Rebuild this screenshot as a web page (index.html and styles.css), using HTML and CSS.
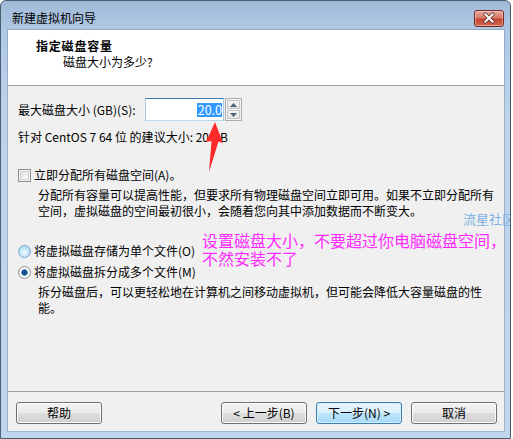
FILE: index.html
```html
<!DOCTYPE html>
<html lang="zh-CN">
<head>
<meta charset="utf-8">
<title>新建虚拟机向导</title>
<link rel="stylesheet" href="styles.css">
</head>
<body>
<div class="window">
  <div class="titlebar">
    <span class="title">新建虚拟机向导</span>
    <div class="close">
      <svg width="30" height="17" viewBox="0 0 30 17">
        <path d="M11 4 L19 12 M19 4 L11 12" stroke="#5a2a24" stroke-width="4" stroke-linecap="round"/>
        <path d="M11 4 L19 12 M19 4 L11 12" stroke="#ffffff" stroke-width="2.2" stroke-linecap="round"/>
      </svg>
    </div>
  </div>
  <div class="client">
    <div class="header">
      <div class="h-title">指定磁盘容量</div>
      <div class="h-sub">磁盘大小为多少?</div>
    </div>
    <div class="content">
      <div class="size-row">
        <span class="size-label">最大磁盘大小 (GB)(S):</span>
        <div class="textbox"><span class="sel">20.0</span></div>
        <div class="spin">
          <div class="spin-btn"><svg width="7" height="4" viewBox="0 0 7 4"><path d="M0 4 L3.5 0 L7 4 Z" fill="#4b5f7f"/></svg></div>
          <div class="spin-btn"><svg width="7" height="4" viewBox="0 0 7 4"><path d="M0 0 L3.5 4 L7 0 Z" fill="#4b5f7f"/></svg></div>
        </div>
      </div>
      <div class="line suggest">针对 CentOS 7 64 位 的建议大小: 20 GB</div>
      <div class="line opt opt-check"><span class="checkbox"></span><span>立即分配所有磁盘空间(A)。</span></div>
      <div class="desc">分配所有容量可以提高性能，但要求所有物理磁盘空间立即可用。如果不立即分配所有<br>空间，虚拟磁盘的空间最初很小，会随着您向其中添加数据而不断变大。</div>
      <div class="line opt opt-r1"><span class="radio hover"></span><span>将虚拟磁盘存储为单个文件(O)</span></div>
      <div class="line opt opt-r2"><span class="radio checked"></span><span>将虚拟磁盘拆分成多个文件(M)</span></div>
      <div class="desc">拆分磁盘后，可以更轻松地在计算机之间移动虚拟机，但可能会降低大容量磁盘的性<br>能。</div>
    </div>
    <div class="footer">
      <button class="btn">帮助</button>
      <div class="nav">
        <button class="btn">&lt; 上一步(B)</button>
        <button class="btn default">下一步(N) &gt;</button>
        <button class="btn">取消</button>
      </div>
    </div>
  </div>
  <svg class="arrow" width="24" height="54" viewBox="0 0 24 54">
    <path d="M11 0 L19 21 L14.5 19.5 L5 50 L7.5 19 L2 20 Z" fill="#ff2b2b"/>
  </svg>
  <div class="note">设置磁盘大小，不要超过你电脑磁盘空间，<br>不然安装不了</div>
  <div class="watermark">流星社区</div>
</div>
</body>
</html>
```

FILE: styles.css
```css
html, body {
  margin: 0;
  padding: 0;
  background: #ffffff;
}

body {
  font-family: "Noto Sans CJK SC", "Noto Sans", sans-serif;
  font-size: 12px;
  color: #000;
}

.window {
  position: relative;
  width: 511px;
  height: 439px;
  box-sizing: border-box;
  border: 1px solid #4e5d6e;
  border-radius: 6px 6px 0 0;
  background: linear-gradient(180deg, #9fbad8 0px, #b0c9e4 30px, #bcd3eb 120px, #c0d6ee 100%);
  padding: 0 6px 7px 7px;
  display: flex;
  flex-direction: column;
  overflow: hidden;
}

.titlebar {
  height: 29px;
  display: flex;
  align-items: flex-start;
  padding-left: 4px;
}

.title {
  padding-top: 9px;
  line-height: 16px;
  color: #000;
}

.close {
  margin-left: auto;
  margin-top: 9px;
  width: 30px;
  height: 17px;
  box-sizing: border-box;
  border: 1px solid #7b2a22;
  border-radius: 3px;
  background: linear-gradient(180deg, #e9a99c 0%, #d97a68 45%, #c4442f 55%, #cf6a52 100%);
  display: flex;
  align-items: center;
  justify-content: center;
  box-shadow: inset 0 0 0 1px rgba(255, 255, 255, 0.35);
}

.close svg {
  display: block;
}

.client {
  flex: 1;
  display: flex;
  flex-direction: column;
  background: #f0f0f0;
  box-shadow: 0 0 0 1px rgba(60, 80, 110, 0.25);
}

.header {
  height: 56px;
  box-sizing: border-box;
  background: #ffffff;
  border-bottom: 1px solid #a0a0a0;
  padding-top: 8px;
  padding-left: 28px;
}

.header + .content {
  margin-top: 1px;
}

.h-title {
  font-weight: bold;
  line-height: 16px;
  letter-spacing: 0.8px;
}

.h-sub {
  line-height: 16px;
  padding-left: 27px;
}

.content {
  flex: 1;
  padding-left: 10px;
}

.size-row {
  display: flex;
  align-items: center;
  margin-top: 11px;
  height: 23px;
}

.size-label {
  width: 127px;
  line-height: 16px;
}

.textbox {
  width: 79px;
  height: 23px;
  box-sizing: border-box;
  border: 1px solid #a4c9e3;
  border-top-color: #3d7bad;
  border-bottom-color: #b7d9ed;
  background: #fff;
  display: flex;
  align-items: center;
  justify-content: flex-end;
  padding-right: 1px;
}

.sel {
  background: #3399ff;
  color: #fff;
  line-height: 14px;
  padding: 0 0 0 1px;
  font-size: 12.5px;
}

.spin {
  margin-left: 1px;
  width: 17px;
  height: 23px;
  box-sizing: border-box;
  border: 1px solid #adadad;
  background: #f4f4f4;
  display: flex;
  flex-direction: column;
  padding: 1px;
  gap: 1px;
}

.spin-btn {
  flex: 1;
  border: 1px solid #c6c6c6;
  border-radius: 1px;
  background: linear-gradient(180deg, #f6f6f6, #e2e2e2);
  display: flex;
  align-items: center;
  justify-content: center;
}

.spin-btn svg {
  display: block;
}

.line {
  line-height: 16px;
  white-space: nowrap;
}

.suggest {
  margin-top: 8px;
}

.opt {
  display: flex;
  align-items: center;
  gap: 3px;
}

.opt-check {
  margin-top: 22px;
}

.opt-r1 {
  margin-top: 24px;
}

.opt-r2 {
  margin-top: 5px;
}

.checkbox {
  width: 13px;
  height: 13px;
  box-sizing: border-box;
  border: 1px solid #8e8f8f;
  background: linear-gradient(135deg, #d6d6d6 0%, #f3f3f3 55%, #ffffff 100%);
  box-shadow: inset 0 0 0 1px #f4f4f4, inset 0 0 0 2px #cfcfcf;
}

.radio {
  width: 13px;
  height: 13px;
  box-sizing: border-box;
  border-radius: 50%;
  border: 1px solid #8a9bad;
}

.radio.hover {
  background: radial-gradient(circle at 50% 60%, #f2fbff 0%, #bde3f8 55%, #8ec8ec 100%);
  border-color: #7fa7c9;
}

.radio.checked {
  border-color: #8e8f8f;
  background: radial-gradient(circle at 50% 50%, #0f3a6b 0%, #1c5c9a 28%, #2f79b8 38%, #ffffff 45%, #e4e4e4 100%);
}

.desc {
  margin-top: 4px;
  padding-left: 20px;
  line-height: 16px;
  white-space: nowrap;
}

.footer {
  border-top: 1px solid #a0a0a0;
  padding: 10px 7px 7px 8px;
  display: flex;
  align-items: flex-start;
}

.nav {
  margin-left: auto;
  display: flex;
  gap: 9px;
}

.btn {
  width: 86px;
  height: 22px;
  box-sizing: border-box;
  border: 1px solid #707070;
  border-radius: 3px;
  background: linear-gradient(180deg, #f2f2f2 0%, #ebebeb 48%, #dddddd 52%, #cfcfcf 100%);
  box-shadow: inset 0 0 0 1px #fcfcfc;
  font-family: "Noto Sans CJK SC", "Noto Sans", sans-serif;
  font-size: 12px;
  line-height: 16px;
  color: #000;
  padding: 0;
}

.btn.default {
  border-color: #3c7fb1;
  background: linear-gradient(180deg, #eaf6fd 0%, #d9f0fc 48%, #bee6fd 52%, #a7d9f5 100%);
  box-shadow: inset 0 0 0 1px #d6eefb;
}

.arrow {
  position: absolute;
  left: 203px;
  top: 121px;
}

.note {
  position: absolute;
  left: 201px;
  top: 230px;
  font-size: 16px;
  line-height: 18px;
  color: #ff2bff;
  white-space: nowrap;
}

.watermark {
  position: absolute;
  left: 462px;
  top: 210px;
  font-size: 13px;
  line-height: 16px;
  color: #7fb0e2;
  white-space: nowrap;
}
```
